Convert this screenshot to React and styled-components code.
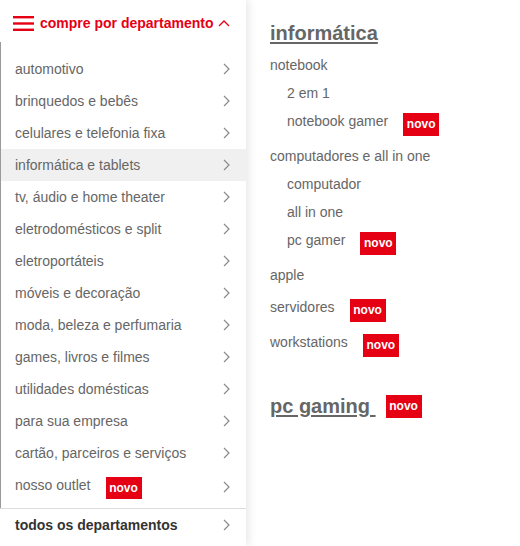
import React from "react";
import styled, { createGlobalStyle } from "styled-components";

const GlobalStyle = createGlobalStyle`
  html, body {
    margin: 0;
    padding: 0;
    background: #fff;
  }
  body {
    font-family: "Liberation Sans", Arial, sans-serif;
  }
`;

const Page = styled.div`
  display: flex;
  width: 520px;
  height: 546px;
  overflow: hidden;
  background: #fff;
`;

const Sidebar = styled.div`
  width: 246px;
  flex-shrink: 0;
  display: flex;
  flex-direction: column;
  background: #fff;
  box-shadow: 3px 0 8px rgba(0, 0, 0, 0.09);
  position: relative;
  z-index: 1;
`;

const Header = styled.div`
  height: 42px;
  box-sizing: border-box;
  padding: 4px 0 0 13px;
  display: flex;
  align-items: center;
  color: #e60014;
  font-size: 14px;
  font-weight: 700;
`;

const HeaderLabel = styled.span`
  margin: 0 5px 0 6px;
`;

const List = styled.ul`
  list-style: none;
  margin: 0;
  padding: 11px 0 3px;
  border-left: 1px solid #9a9a9a;
`;

const Row = styled.li`
  display: flex;
  align-items: center;
  justify-content: space-between;
  padding: 6px 16px 6px 14px;
  line-height: 20px;
  font-size: 14px;
  color: #666;
  background: ${({ $active }) => ($active ? "#f0f0f0" : "transparent")};
`;

const Label = styled.div`
  display: flex;
  align-items: flex-start;
`;

const Footer = styled(Row)`
  border-top: 1px solid #dcdcdc;
  padding-left: 15px;
  color: #333;
  font-weight: 700;
`;

const Badge = styled.span`
  display: inline-block;
  width: 36px;
  height: ${({ $h }) => $h || 23}px;
  line-height: ${({ $h }) => $h || 23}px;
  margin: 2px 0 0 15px;
  background: #e60014;
  color: #fff;
  font-size: 12px;
  font-weight: 700;
  text-align: center;
  flex-shrink: 0;
`;

const Content = styled.div`
  flex: 1;
  padding: 21px 0 0 24px;
  color: #666;
`;

const Heading = styled.h2`
  display: flex;
  align-items: flex-start;
  margin: ${({ $top }) => $top || 0}px 0 6px;
  font-size: 20px;
  line-height: 24px;
  font-weight: 700;
  color: #666;
`;

const HeadingLink = styled.span`
  text-decoration: underline;
  text-underline-offset: 2px;
`;

const HeadingBadge = styled(Badge)`
  margin: 1px 0 0 10px;
`;

const SubList = styled.ul`
  list-style: none;
  margin: 0;
  padding: 0;
`;

const Item = styled.li`
  display: flex;
  align-items: flex-start;
  padding: 4px 0 ${({ $badge }) => ($badge ? 2 : 4)}px ${({ $sub }) => ($sub ? 17 : 0)}px;
  margin-top: ${({ $sub }) => ($sub ? 0 : 4)}px;
  font-size: 14px;
  line-height: 20px;
  color: #666;
`;

const Chevron = () => (
  <svg width="7" height="12" viewBox="0 0 7 12">
    <polyline points="1,1 6,6 1,11" fill="none" stroke="#8a8a8a" strokeWidth="1.2" />
  </svg>
);

const Burger = () => (
  <svg width="21" height="15" viewBox="0 0 21 15">
    <rect x="0" y="0" width="21" height="2.4" fill="#e60014" />
    <rect x="0" y="6.3" width="21" height="2.4" fill="#e60014" />
    <rect x="0" y="12.6" width="21" height="2.4" fill="#e60014" />
  </svg>
);

const Caret = () => (
  <svg width="12" height="7" viewBox="0 0 12 7">
    <polyline points="1,6 6,1 11,6" fill="none" stroke="#e60014" strokeWidth="1.3" />
  </svg>
);

const departments = [
  "automotivo",
  "brinquedos e bebês",
  "celulares e telefonia fixa",
  "informática e tablets",
  "tv, áudio e home theater",
  "eletrodomésticos e split",
  "eletroportáteis",
  "móveis e decoração",
  "moda, beleza e perfumaria",
  "games, livros e filmes",
  "utilidades domésticas",
  "para sua empresa",
  "cartão, parceiros e serviços",
  { name: "nosso outlet", novo: true },
];

const links = [
  { name: "notebook" },
  { name: "2 em 1", sub: true },
  { name: "notebook gamer", sub: true, novo: true },
  { name: "computadores e all in one" },
  { name: "computador", sub: true },
  { name: "all in one", sub: true },
  { name: "pc gamer", sub: true, novo: true },
  { name: "apple" },
  { name: "servidores", novo: true },
  { name: "workstations", novo: true },
];

export default function App() {
  return (
    <>
      <GlobalStyle />
      <Page>
        <Sidebar>
          <Header>
            <Burger />
            <HeaderLabel>compre por departamento</HeaderLabel>
            <Caret />
          </Header>
          <List>
            {departments.map((d) => {
              const name = typeof d === "string" ? d : d.name;
              const novo = typeof d === "string" ? false : d.novo;
              return (
                <Row key={name} $active={name === "informática e tablets"}>
                  <Label>
                    {name}
                    {novo && <Badge $h={22}>novo</Badge>}
                  </Label>
                  <Chevron />
                </Row>
              );
            })}
          </List>
          <Footer as="div">
            <span>todos os departamentos</span>
            <Chevron />
          </Footer>
        </Sidebar>
        <Content>
          <Heading>
            <HeadingLink>informática</HeadingLink>
          </Heading>
          <SubList>
            {links.map((l) => (
              <Item key={l.name} $sub={l.sub} $badge={l.novo}>
                {l.name}
                {l.novo && <Badge>novo</Badge>}
              </Item>
            ))}
          </SubList>
          <Heading $top={35}>
            <HeadingLink>pc gaming&nbsp;</HeadingLink>
            <HeadingBadge>novo</HeadingBadge>
          </Heading>
        </Content>
      </Page>
    </>
  );
}
